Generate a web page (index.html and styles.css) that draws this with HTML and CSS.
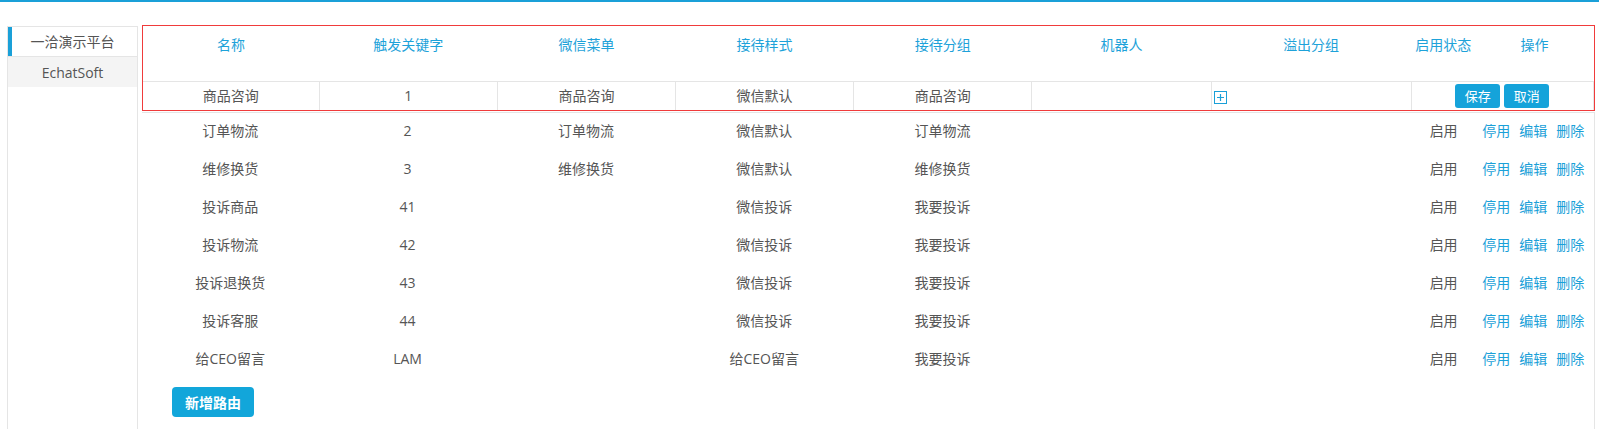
FILE: index.html
```html
<!DOCTYPE html>
<html lang="zh-CN">
<head>
  <meta charset="UTF-8">
  <title>路由设置</title>
  <link rel="stylesheet" href="styles.css">
</head>
<body>
  <div class="layout">
    <ul class="sidebar">
      <li class="sidebar-item active">一洽演示平台</li>
      <li class="sidebar-item alt">EchatSoft</li>
    </ul>

    <div class="content">
      <div class="route-edit">
        <table class="route-table">
          <colgroup>
            <col class="c-name"><col class="c-mid"><col class="c-mid"><col class="c-mid"><col class="c-mid">
            <col class="c-robot"><col class="c-overflow"><col class="c-status"><col class="c-ops">
          </colgroup>
          <thead>
            <tr>
              <th>名称</th>
              <th>触发关键字</th>
              <th>微信菜单</th>
              <th>接待样式</th>
              <th>接待分组</th>
              <th>机器人</th>
              <th>溢出分组</th>
              <th>启用状态</th>
              <th>操作</th>
            </tr>
          </thead>
          <tbody>
            <tr class="edit-row">
              <td>商品咨询</td>
              <td>1</td>
              <td>商品咨询</td>
              <td>微信默认</td>
              <td>商品咨询</td>
              <td></td>
              <td class="overflow-cell">
                <span class="add-icon">
                  <svg width="13" height="13" viewBox="0 0 13 13">
                    <rect x="0.5" y="0.5" width="12" height="12" fill="#fff" stroke="#1aa0d8"/>
                    <path d="M6.5 3v7M3 6.5h7" stroke="#1aa0d8" stroke-width="1.2"/>
                  </svg>
                </span>
              </td>
              <td colspan="2" class="edit-actions">
                <div class="edit-buttons">
                  <button class="btn-small">保存</button>
                  <button class="btn-small">取消</button>
                </div>
              </td>
            </tr>
          </tbody>
        </table>
      </div>

      <div class="route-list">
        <table class="route-table">
          <colgroup>
            <col class="c-name"><col class="c-mid"><col class="c-mid"><col class="c-mid"><col class="c-mid">
            <col class="c-robot"><col class="c-overflow"><col class="c-status"><col class="c-ops">
          </colgroup>
          <tbody>
            <tr>
              <td>订单物流</td><td>2</td><td>订单物流</td><td>微信默认</td><td>订单物流</td><td></td><td></td><td>启用</td>
              <td><div class="ops"><a href="#">停用</a><a href="#">编辑</a><a href="#">删除</a></div></td>
            </tr>
            <tr>
              <td>维修换货</td><td>3</td><td>维修换货</td><td>微信默认</td><td>维修换货</td><td></td><td></td><td>启用</td>
              <td><div class="ops"><a href="#">停用</a><a href="#">编辑</a><a href="#">删除</a></div></td>
            </tr>
            <tr>
              <td>投诉商品</td><td>41</td><td></td><td>微信投诉</td><td>我要投诉</td><td></td><td></td><td>启用</td>
              <td><div class="ops"><a href="#">停用</a><a href="#">编辑</a><a href="#">删除</a></div></td>
            </tr>
            <tr>
              <td>投诉物流</td><td>42</td><td></td><td>微信投诉</td><td>我要投诉</td><td></td><td></td><td>启用</td>
              <td><div class="ops"><a href="#">停用</a><a href="#">编辑</a><a href="#">删除</a></div></td>
            </tr>
            <tr>
              <td>投诉退换货</td><td>43</td><td></td><td>微信投诉</td><td>我要投诉</td><td></td><td></td><td>启用</td>
              <td><div class="ops"><a href="#">停用</a><a href="#">编辑</a><a href="#">删除</a></div></td>
            </tr>
            <tr>
              <td>投诉客服</td><td>44</td><td></td><td>微信投诉</td><td>我要投诉</td><td></td><td></td><td>启用</td>
              <td><div class="ops"><a href="#">停用</a><a href="#">编辑</a><a href="#">删除</a></div></td>
            </tr>
            <tr>
              <td>给CEO留言</td><td>LAM</td><td></td><td>给CEO留言</td><td>我要投诉</td><td></td><td></td><td>启用</td>
              <td><div class="ops"><a href="#">停用</a><a href="#">编辑</a><a href="#">删除</a></div></td>
            </tr>
          </tbody>
        </table>
        <button class="btn-add">新增路由</button>
      </div>
    </div>
  </div>
</body>
</html>
```

FILE: styles.css
```css
* {
  box-sizing: border-box;
}

html, body {
  height: 100%;
}

body {
  margin: 0;
  border-top: 2px solid #1aa0d8;
  font-family: 'Open Sans', 'Noto Sans CJK SC', sans-serif;
  font-size: 14px;
  color: #555;
  background: #fff;
}

.layout {
  display: flex;
  align-items: stretch;
  padding: 24px 4px 0 7px;
  height: 100%;
}

/* left platform list */
.sidebar {
  list-style: none;
  margin: 0;
  padding: 0;
  width: 131px;
  flex-shrink: 0;
  border: 1px solid #e5e5e5;
  border-bottom: none;
}

.sidebar-item {
  text-align: center;
  color: #555;
}

.sidebar-item.active {
  height: 29px;
  line-height: 29px;
  box-shadow: inset 4px 0 #1aa0d8;
}

.sidebar-item.alt {
  height: 31px;
  line-height: 31px;
  background: #f4f4f4;
  border-top: 1px solid #e5e5e5;
}

.content {
  flex: 1;
  margin-left: 4px;
  display: flex;
  flex-direction: column;
}

.route-table {
  width: 100%;
  border-collapse: collapse;
  table-layout: fixed;
}

.c-name { width: 176px; }
.c-mid { width: 178px; }
.c-robot { width: 179px; }
.c-overflow { width: 200px; }
.c-status { width: 64px; }
.c-ops { width: 118px; }

.route-table th,
.route-table td {
  padding: 0;
  text-align: center;
  font-weight: normal;
  white-space: nowrap;
}

/* header + editing row */
.route-edit {
  border: 1px solid #f03b3b;
  margin-top: -1px;
}

.route-table th {
  height: 55px;
  vertical-align: top;
  padding-top: 9px;
  line-height: 20px;
  color: #1ea2d9;
}

.edit-row td {
  height: 29px;
  border: 1px solid #e5e5e5;
  border-bottom: none;
  line-height: 20px;
  color: #555;
}

.edit-row td:first-child {
  border-left: none;
}

.edit-row .overflow-cell {
  text-align: left;
  padding-left: 2px;
}

.add-icon {
  display: inline-block;
  vertical-align: middle;
  height: 13px;
  margin-top: 1px;
}

.add-icon svg {
  display: block;
}

.edit-actions {
  vertical-align: top;
}

.edit-buttons {
  display: flex;
  justify-content: center;
  gap: 4px;
  padding-top: 2px;
}

.btn-small {
  height: 24px;
  width: 45px;
  padding: 0;
  border: none;
  border-radius: 3px;
  background: #15a3da;
  color: #fff;
  font-family: inherit;
  font-size: 13px;
  cursor: pointer;
}

/* existing routes */
.route-list {
  flex: 1;
  margin-top: 1px;
  border-top: 1px solid #e5e5e5;
  border-right: 1px solid #e5e5e5;
}

.route-list td {
  height: 38px;
  line-height: 20px;
  color: #555;
  padding-bottom: 2px;
}

.ops {
  display: flex;
  justify-content: center;
  gap: 9px;
  padding-right: 3px;
}

.ops a {
  color: #1aa0d8;
  text-decoration: none;
}

.btn-add {
  margin: 8px 0 0 30px;
  width: 82px;
  height: 30px;
  border: none;
  border-radius: 4px;
  background: #12a6da;
  color: #fff;
  font-family: inherit;
  font-size: 14px;
  font-weight: bold;
  cursor: pointer;
}
```
